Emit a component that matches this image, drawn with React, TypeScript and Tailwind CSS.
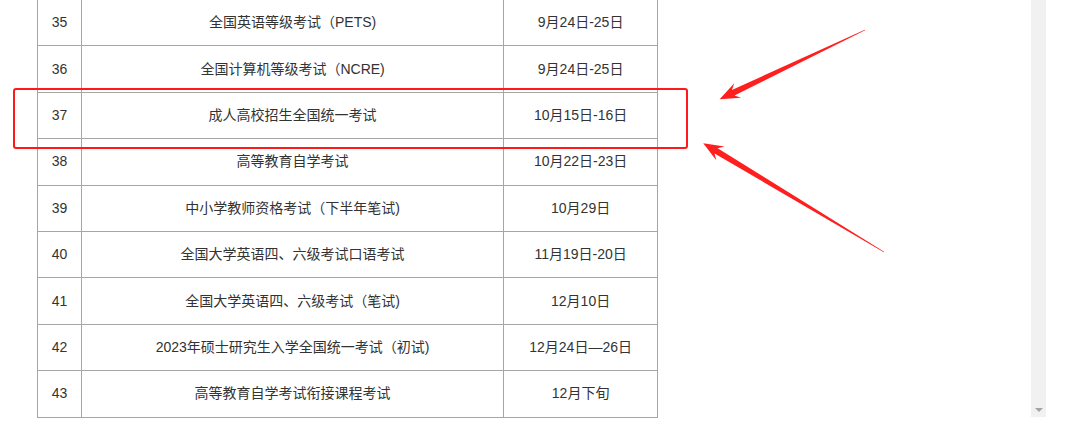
import React from 'react';

const rows: [string, string, string][] = [
  ['35', '全国英语等级考试（PETS)', '9月24日-25日'],
  ['36', '全国计算机等级考试（NCRE)', '9月24日-25日'],
  ['37', '成人高校招生全国统一考试', '10月15日-16日'],
  ['38', '高等教育自学考试', '10月22日-23日'],
  ['39', '中小学教师资格考试（下半年笔试)', '10月29日'],
  ['40', '全国大学英语四、六级考试口语考试', '11月19日-20日'],
  ['41', '全国大学英语四、六级考试（笔试)', '12月10日'],
  ['42', '2023年硕士研究生入学全国统一考试（初试)', '12月24日—26日'],
  ['43', '高等教育自学考试衔接课程考试', '12月下旬'],
];

// arrow drawn along local x axis, tail at 0, tip at len
const Arrow = ({ x, y, angle, len }: { x: number; y: number; angle: number; len: number }) => (
  <g transform={`translate(${x} ${y}) rotate(${angle})`}>
    <polygon
      points={`0,-0.3 ${len - 15},-3 ${len - 20},-8 ${len},0 ${len - 20},8 ${len - 15},3 0,0.3`}
      fill="#ff1f1f"
    />
  </g>
);

export default function App() {
  return (
    <div
      className="flex w-[1080px] h-[438px] bg-white overflow-hidden text-[#333] text-[14px]"
      style={{ fontFamily: '"Liberation Sans", "Noto Sans CJK SC", sans-serif' }}
    >
      <div className="relative flex-1">
        <div className="pl-[37px] -mt-[1px]">
          <table className="border-collapse w-[621px]">
            <colgroup>
              <col className="w-[44px]" />
              <col className="w-[423px]" />
              <col className="w-[154px]" />
            </colgroup>
            <tbody>
              {rows.map((r) => (
                <tr key={r[0]} className="h-[46.4px]">
                  {r.map((c, i) => (
                    <td key={i} className="border border-[#a6a6a6] text-center align-middle p-0">
                      {c}
                    </td>
                  ))}
                </tr>
              ))}
            </tbody>
          </table>
        </div>

        {/* highlight box */}
        <div className="absolute left-[13px] top-[88px] w-[675px] h-[61px] border-2 border-[#ff1a1a] rounded-[3px]" />

        <svg className="absolute left-0 top-0" width="1031" height="438">
          <Arrow x={865} y={30} angle={154.55} len={161} />
          <Arrow x={884} y={252} angle={-148.94} len={211} />
        </svg>
      </div>

      {/* scrollbar */}
      <div className="w-[15px] h-[417px] bg-[#f1f1f1] flex flex-col justify-end items-center pb-[5px]">
        <div className="w-0 h-0 border-l-[4px] border-r-[4px] border-t-[4px] border-l-transparent border-r-transparent border-t-[#a3a3a3]" />
      </div>
      <div className="w-[34px]" />
    </div>
  );
}
